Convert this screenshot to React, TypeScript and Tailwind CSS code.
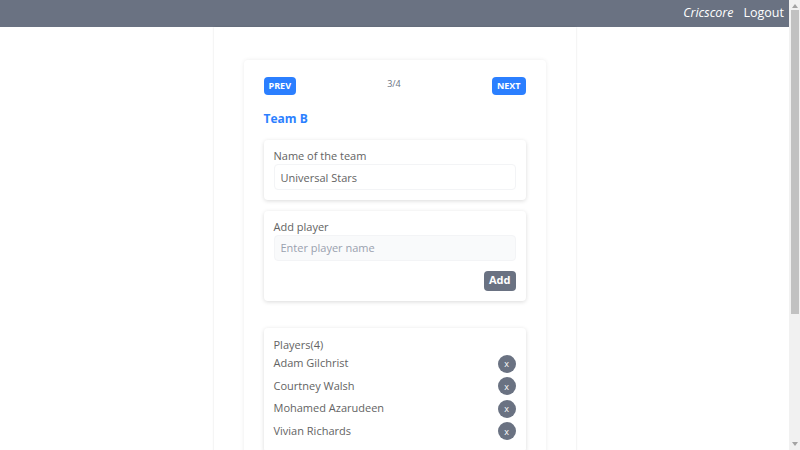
export default function App() {
  const players = ['Adam Gilchrist', 'Courtney Walsh', 'Mohamed Azarudeen', 'Vivian Richards']

  return (
    <div className="h-screen flex overflow-hidden bg-white text-[#636363]" style={{ fontFamily: '"Open Sans", "Noto Sans", sans-serif' }}>
      <div className="flex-1 min-w-0">
        {/* Top bar */}
        <header className="h-[27px] bg-gray-500 flex items-center justify-end gap-[10px] pr-[5px] text-white text-[12.5px]">
          <span className="italic">Cricscore</span>
          <span>Logout</span>
        </header>

        {/* Page container */}
        <main className="w-[362px] mx-auto px-[30px] pt-[33px] pb-[150px] shadow-[0_0_2px_rgba(0,0,0,0.12)]">
          <div className="px-5 pt-[17px] pb-6 shadow-[0_0_4px_rgba(0,0,0,0.08)] rounded">
            {/* Pager */}
            <div className="flex justify-between items-start">
              <button className="h-[18px] px-[5px] bg-blue-500 text-white text-[9px] font-bold rounded-sm">PREV</button>
              <span className="text-[9px] leading-[14px] text-gray-500">3/4</span>
              <button className="h-[18px] px-[5px] bg-blue-500 text-white text-[9px] font-bold rounded-sm">NEXT</button>
            </div>

            <h2 className="mt-[15px] text-[12px] font-bold text-blue-500 leading-[18px]">Team B</h2>

            {/* Team name */}
            <div className="mt-[12px] px-[10px] pt-[8px] pb-[10px] rounded shadow-[0_1px_4px_rgba(0,0,0,0.15)]">
              <label className="block text-[11px] leading-[15px]">Name of the team</label>
              <input
                className="mt-[1px] w-full h-[26px] px-[6px] text-[11px] text-[#636363] border border-gray-100 rounded-sm outline-none"
                defaultValue="Universal Stars"
              />
            </div>

            {/* Add player */}
            <div className="mt-[11px] px-[10px] pt-[8px] pb-[10px] rounded shadow-[0_1px_4px_rgba(0,0,0,0.15)]">
              <label className="block text-[11px] leading-[15px]">Add player</label>
              <input
                className="w-full h-[26px] px-[6px] text-[11px] bg-gray-50 border border-gray-100 rounded-sm outline-none placeholder:text-gray-400"
                placeholder="Enter player name"
              />
              <div className="flex justify-end mt-[10px]">
                <button className="h-[20px] px-[5px] bg-gray-500 text-white text-[11px] font-bold rounded-sm">Add</button>
              </div>
            </div>

            {/* Player list */}
            <div className="mt-[27px] px-[10px] pt-[9px] pb-[12px] rounded shadow-[0_1px_4px_rgba(0,0,0,0.15)]">
              <div className="text-[11px] leading-[15px]">Players(4)</div>
              <ul className="mt-[3px] flex flex-col gap-[4.5px]">
                {players.map((p) => (
                  <li key={p} className="flex items-center justify-between h-[18px]">
                    <span className="text-[11px]">{p}</span>
                    <button className="w-[18px] h-[18px] rounded-full bg-gray-500 text-white text-[9px] leading-none flex items-center justify-center">x</button>
                  </li>
                ))}
              </ul>
            </div>
          </div>
        </main>
      </div>

      {/* Scrollbar */}
      <div className="w-[11px] shrink-0 bg-[#f1f1f1] flex flex-col items-center">
        <svg width="6" height="4" viewBox="0 0 6 4" className="mt-[4px]">
          <path d="M3 0 L6 4 L0 4 Z" fill="#a3a3a3" />
        </svg>
        <div className="mt-[2px] w-[8px] h-[304px] bg-[#c1c1c1]" />
        <div className="flex-1" />
        <svg width="6" height="4" viewBox="0 0 6 4" className="mb-[4px]">
          <path d="M0 0 L6 0 L3 4 Z" fill="#a3a3a3" />
        </svg>
      </div>
    </div>
  )
}
